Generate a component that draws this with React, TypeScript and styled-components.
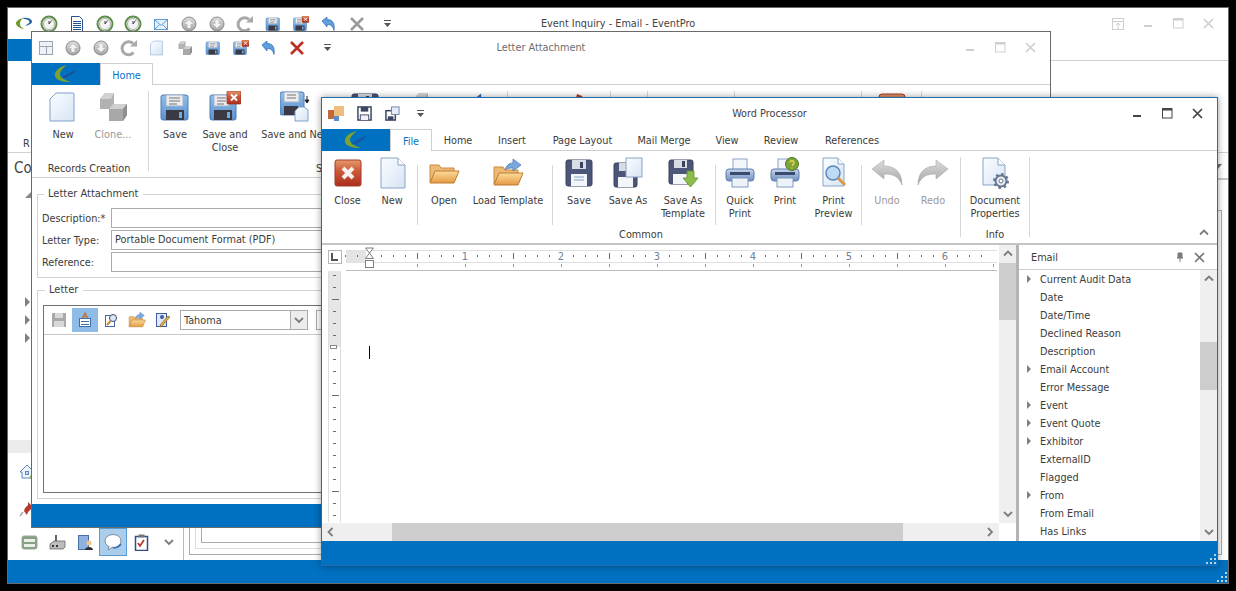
import React from 'react';
import styled, { createGlobalStyle } from 'styled-components';

const GlobalStyle = createGlobalStyle`
  html, body { margin: 0; padding: 0; background: #000; }
  body { font-family: "DejaVu Sans Condensed", "DejaVu Sans", sans-serif; font-size: 10.8px; color: #3c3c3c; }
`;

const BLUE = '#0070c0';

const Desktop = styled.div`
  position: relative;
  width: 1236px;
  height: 591px;
  background: #000;
  overflow: hidden;
`;

/* the three windows sit on a free desktop and overlap */
const Window = styled.div<{ $x: number; $y: number; $w: number; $h: number; $z: number; $active?: boolean }>`
  position: absolute;
  left: ${p => p.$x}px;
  top: ${p => p.$y}px;
  width: ${p => p.$w}px;
  height: ${p => p.$h}px;
  z-index: ${p => p.$z};
  box-sizing: border-box;
  display: flex;
  flex-direction: column;
  background: #fff;
  border: 1px solid ${p => (p.$active ? '#1f6fae' : '#6a6a6a')};
  box-shadow: ${p => (p.$active ? '0 0 7px rgba(0,0,0,.4)' : 'none')};
`;

const TitleRow = styled.div`
  height: 31px;
  flex: none;
  display: grid;
  grid-template-columns: 1fr auto 1fr;
  align-items: center;
`;

const Qat = styled.div<{ $pad?: number }>`
  display: flex;
  align-items: center;
  padding-left: ${p => p.$pad || 0}px;
`;

const QatCell = styled.div<{ $w?: number }>`
  width: ${p => p.$w || 28}px;
  height: 24px;
  flex: none;
  display: flex;
  align-items: center;
  justify-content: center;
`;

const Title = styled.div<{ $dim?: boolean }>`
  color: ${p => (p.$dim ? '#6e6e6e' : '#444')};
  white-space: nowrap;
`;

const WinButtons = styled.div`
  display: flex;
  justify-content: flex-end;
  padding-right: 5px;
`;

const WinButton = styled.div`
  width: 30px;
  height: 24px;
  display: flex;
  align-items: center;
  justify-content: center;
`;

const TabRow = styled.div`
  height: 22px;
  flex: none;
  display: flex;
  box-sizing: border-box;
  border-bottom: 1px solid #cfcfcf;
`;

const LogoTab = styled.div`
  width: 68px;
  height: 22px;
  flex: none;
  background: ${BLUE};
  display: flex;
  align-items: center;
  justify-content: center;
`;

const Tab = styled.div<{ $w: number; $on?: boolean }>`
  width: ${p => p.$w}px;
  height: ${p => (p.$on ? 22 : 21)}px;
  box-sizing: border-box;
  flex: none;
  display: flex;
  align-items: center;
  justify-content: center;
  padding-top: 2px;
  color: ${p => (p.$on ? '#0a72c4' : '#3c3c3c')};
  background: #fff;
  ${p => (p.$on ? 'border: 1px solid #cfcfcf; border-bottom: 0; position: relative; z-index: 1;' : '')}
`;

const Ribbon = styled.div<{ $pad: number }>`
  height: 92px;
  flex: none;
  box-sizing: border-box;
  display: flex;
  padding-left: ${p => p.$pad}px;
  position: relative;
`;

const Group = styled.div`
  display: flex;
  flex-direction: column;
  justify-content: space-between;
  padding-top: 6px;
  padding-bottom: 2px;
  box-sizing: border-box;
`;

const GroupItems = styled.div`
  display: flex;
`;

const GroupLabel = styled.div`
  text-align: center;
  line-height: 13px;
`;

const RibbonButton = styled.div<{ $w: number; $off?: boolean }>`
  width: ${p => p.$w}px;
  flex: none;
  display: flex;
  flex-direction: column;
  align-items: center;
  color: ${p => (p.$off ? '#9a9a9a' : '#3c3c3c')};
`;

const IconSlot = styled.div`
  height: 32px;
  display: flex;
  align-items: center;
  justify-content: center;
`;

const ButtonLabel = styled.div`
  margin-top: 5px;
  line-height: 13px;
  text-align: center;
  white-space: nowrap;
`;

const ItemSep = styled.div`
  width: 1px;
  height: 60px;
  margin: 8px 3px 0;
  background: #d8d8d8;
  flex: none;
`;

const GroupSep = styled.div<{ $left?: number }>`
  width: 1px;
  height: 80px;
  margin: 6px 3px 0 ${p => p.$left ?? 3}px;
  background: #d8d8d8;
  flex: none;
`;

const Collapse = styled.div`
  position: absolute;
  right: 8px;
  bottom: 5px;
`;

const StatusBar = styled.div<{ $h: number }>`
  height: ${p => p.$h}px;
  flex: none;
  background: ${BLUE};
  display: flex;
  justify-content: flex-end;
  align-items: flex-end;
`;

/* ---------- main window, mostly hidden ---------- */

const MainRibbon = styled.div`
  height: 92px;
  flex: none;
  box-sizing: border-box;
  border-bottom: 1px solid #d0d0d0;
  display: flex;
  align-items: flex-end;
  padding: 0 0 2px 15px;
`;

const MainBody = styled.div`
  flex: 1;
  min-height: 0;
  display: flex;
`;

const Sidebar = styled.div`
  width: 176px;
  flex: none;
  box-sizing: border-box;
  border-right: 1px solid #b8b8b8;
  display: flex;
  flex-direction: column;
`;

const SidebarHeading = styled.div`
  height: 30px;
  padding-left: 6px;
  display: flex;
  align-items: center;
  font-size: 15px;
  color: #444;
`;

const CornerMark = styled.div`
  margin: 9px 0 0 17px;
  width: 0;
  height: 0;
  border-bottom: 6px solid #8a8a8a;
  border-left: 6px solid transparent;
`;

const TreeMarks = styled.div`
  margin: 99px 0 0 17px;
  display: flex;
  flex-direction: column;
  gap: 8px;
`;

const TreeMark = styled.div`
  width: 0;
  height: 0;
  border-left: 5px solid #808080;
  border-top: 5px solid transparent;
  border-bottom: 5px solid transparent;
`;

const NavBand = styled.div`
  margin-top: auto;
  height: 13px;
  background: #ececec;
`;

const NavRow = styled.div`
  height: 37px;
  padding-left: 11px;
  display: flex;
  align-items: center;
`;

const NavBottom = styled.div`
  height: 32px;
  margin-top: 1px;
  padding-left: 7px;
  display: flex;
  align-items: flex-start;
`;

const NavCell = styled.div<{ $on?: boolean }>`
  width: 28px;
  height: 28px;
  box-sizing: border-box;
  display: flex;
  align-items: center;
  justify-content: center;
  ${p => (p.$on ? 'background: #aacdec; border: 1px solid #5b9bd5;' : '')}
`;

const Content = styled.div`
  flex: 1;
  min-width: 0;
  display: flex;
  flex-direction: column;
`;

const ContentHead = styled.div`
  height: 27px;
  flex: none;
  box-sizing: border-box;
  border-bottom: 2px solid #c8c8c8;
  display: flex;
  justify-content: flex-end;
  padding: 11px 6px 0 0;
`;

const DownMark = styled.div`
  width: 0;
  height: 0;
  border-top: 6px solid #707070;
  border-left: 5px solid transparent;
  border-right: 5px solid transparent;
`;

const NestedOuter = styled.div`
  flex: 1;
  margin: 30px 6px 5px 5px;
  padding: 5px;
  border: 1px solid #ababab;
  display: flex;
`;

const NestedMiddle = styled(NestedOuter)`
  margin: 0;
  border-color: #dcdcdc;
`;

const NestedInner = styled.div`
  flex: 1;
  border: 1px solid #ababab;
`;

/* ---------- letter attachment body ---------- */

const LetterBody = styled.div`
  flex: 1;
  min-height: 0;
  border-top: 1px solid #cfcfcf;
  padding: 9px 5px 5px;
  display: flex;
  flex-direction: column;
  gap: 5px;
`;

const Fieldset = styled.fieldset<{ $grow?: boolean }>`
  margin: 0;
  min-width: 0;
  border: 1px solid #d2d2d2;
  box-sizing: border-box;
  padding: ${p => (p.$grow ? '8px 5px 5px' : '7px 4px 5px')};
  ${p => (p.$grow ? 'flex: 1; min-height: 0; display: flex; flex-direction: column;' : '')}
`;

const Legend = styled.legend`
  margin-left: 2px;
  padding: 0 5px 0 4px;
  line-height: 14px;
  font-size: 11px;
`;

const FormGrid = styled.div`
  display: grid;
  grid-template-columns: 69px 1fr;
  row-gap: 2px;
  align-items: center;
`;

const InputBox = styled.div`
  height: 20px;
  box-sizing: border-box;
  border: 1px solid #ababab;
  padding-left: 3px;
  line-height: 18px;
`;

const EditorFrame = styled.div`
  flex: 1;
  min-height: 0;
  border: 1px solid #707070;
`;

const EditorBar = styled.div`
  height: 29px;
  box-sizing: border-box;
  border-bottom: 1px solid #c8c8c8;
  display: flex;
  align-items: center;
  padding-left: 2px;
`;

const BarCell = styled.div<{ $on?: boolean }>`
  width: 26px;
  height: 24px;
  display: flex;
  align-items: center;
  justify-content: center;
  background: ${p => (p.$on ? '#8fbce6' : 'transparent')};
`;

const FontCombo = styled.div`
  width: 128px;
  height: 20px;
  margin-left: 4px;
  box-sizing: border-box;
  border: 1px solid #ababab;
  display: flex;
  align-items: center;
  padding-left: 3px;
  justify-content: space-between;
  flex: none;
`;

const ComboArrow = styled.div`
  width: 16px;
  height: 18px;
  background: #ececec;
  border-left: 1px solid #ababab;
  display: flex;
  align-items: center;
  justify-content: center;
`;

const SizeCombo = styled.div`
  width: 60px;
  height: 20px;
  margin-left: 8px;
  box-sizing: border-box;
  border: 1px solid #ababab;
  flex: none;
`;

/* ---------- word processor body ---------- */

const WordBody = styled.div`
  flex: 1;
  min-height: 0;
  border-top: 2px solid #c4c4c4;
  display: flex;
`;

const DocPane = styled.div`
  width: 694px;
  flex: none;
  display: flex;
`;

const DocMain = styled.div`
  width: 677px;
  flex: none;
  display: flex;
  flex-direction: column;
`;

const RulerRow = styled.div`
  height: 26px;
  flex: none;
  display: flex;
  padding-left: 6px;
`;

const RulerCorner = styled.div`
  width: 14px;
  height: 14px;
  box-sizing: border-box;
  margin-top: 5px;
  border: 1px solid #b5b5b5;
  display: flex;
  align-items: center;
  justify-content: center;
  flex: none;
`;

const HRuler = styled.svg`
  margin: 5px 0 0 4px;
  overflow: visible;
  display: block;
`;

const DocMiddle = styled.div`
  flex: 1;
  min-height: 0;
  display: flex;
`;

const VRuler = styled.svg`
  flex: none;
  display: block;
`;

const Page = styled.div`
  flex: 1;
  padding: 75px 0 0 28px;
`;

const Caret = styled.div`
  width: 1px;
  height: 13px;
  background: #000;
`;

const HScroll = styled.div`
  height: 18px;
  flex: none;
  background: #efefef;
  display: flex;
  align-items: center;
`;

const ScrollEnd = styled.div`
  width: 18px;
  height: 18px;
  flex: none;
  display: flex;
  align-items: center;
  justify-content: center;
`;

const HThumb = styled.div`
  width: 511px;
  height: 18px;
  margin-left: 52px;
  background: #cdcdcd;
`;

const ScrollGap = styled.div`
  flex: 1;
`;

const VScroll = styled.div<{ $h?: number }>`
  width: 17px;
  flex: none;
  height: ${p => (p.$h ? `${p.$h}px` : 'auto')};
  background: #efefef;
  display: flex;
  flex-direction: column;
`;

const VThumb = styled.div<{ $top: number; $h: number }>`
  margin-top: ${p => p.$top}px;
  height: ${p => p.$h}px;
  background: #cdcdcd;
  flex: none;
`;

const VEnd = styled.div`
  height: 18px;
  flex: none;
  display: flex;
  align-items: center;
  justify-content: center;
`;

const Splitter = styled.div`
  width: 3px;
  flex: none;
  background: #b4b4b4;
`;

const Panel = styled.div`
  flex: 1;
  min-width: 0;
  display: flex;
  flex-direction: column;
`;

const PanelHead = styled.div`
  height: 25px;
  flex: none;
  box-sizing: border-box;
  border-bottom: 1px solid #cfcfcf;
  display: flex;
  align-items: center;
  padding: 0 12px 0 12px;
  gap: 9px;
`;

const PanelTitle = styled.div`
  flex: 1;
`;

const PanelBody = styled.div`
  flex: 1;
  min-height: 0;
  display: flex;
  overflow: hidden;
`;

const Tree = styled.div`
  flex: 1;
  min-width: 0;
`;

const TreeRow = styled.div`
  height: 18px;
  display: flex;
  align-items: center;
  padding-left: 8px;
`;

const TreeArrow = styled.div<{ $show: boolean }>`
  flex: none;
  height: 8px;
  box-sizing: border-box;
  ${p =>
    p.$show
      ? `width: 0; margin-right: 9px; border-left: 4px solid #808080; border-top: 4px solid transparent; border-bottom: 4px solid transparent;`
      : `width: 13px;`}
`;

const IconSvg = styled.svg`
  display: block;
  flex: none;
`;

const SvgDefs = styled.svg`
  position: absolute;
  width: 0;
  height: 0;
`;

const SpellMark = styled.div`
  font-weight: bold;
  color: #3e4664;
  font-size: 11px;
  line-height: 32px;
`;

/* ---------- icons ---------- */

type IconProps = { s?: number };
type BaseProps = IconProps & { children: React.ReactNode; vb?: number };

const Ic = ({ s = 32, vb = 32, children }: BaseProps) => (
  <IconSvg width={s} height={s} viewBox={`0 0 ${vb} ${vb}`}>
    {children}
  </IconSvg>
);

const Defs = () => (
  <SvgDefs>
    <defs>
      <linearGradient id="gBlue" x1="0" y1="0" x2="0" y2="1">
        <stop offset="0" stopColor="#93bfe8" />
        <stop offset="1" stopColor="#5a90cf" />
      </linearGradient>
      <linearGradient id="gPage" x1="0" y1="0" x2="1" y2="1">
        <stop offset="0" stopColor="#fbfdff" />
        <stop offset="1" stopColor="#d6e4f4" />
      </linearGradient>
      <linearGradient id="gRed" x1="0" y1="0" x2="0" y2="1">
        <stop offset="0" stopColor="#e49a6c" />
        <stop offset="0.4" stopColor="#cf5b3a" />
        <stop offset="1" stopColor="#a92d1e" />
      </linearGradient>
      <linearGradient id="gFolder" x1="0" y1="0" x2="0" y2="1">
        <stop offset="0" stopColor="#fbdc9c" />
        <stop offset="1" stopColor="#e59a44" />
      </linearGradient>
      <linearGradient id="gGray" x1="0" y1="0" x2="0" y2="1">
        <stop offset="0" stopColor="#dcdcdc" />
        <stop offset="1" stopColor="#a4a4a4" />
      </linearGradient>
      <linearGradient id="gPrinter" x1="0" y1="0" x2="0" y2="1">
        <stop offset="0" stopColor="#c8d6ea" />
        <stop offset="1" stopColor="#6f8fc0" />
      </linearGradient>
    </defs>
  </SvgDefs>
);

const Logo = () => (
  <IconSvg width="26" height="20" viewBox="0 0 26 20">
    <path d="M14 1C5 3 1 8 2 12c1 4 7 6 16 6-7-2-12-5-11-9 1-3 4-6 7-8z" fill="#7ea32c" />
    <path d="M9 13l14-7-2 3-9 5z" fill="#1d4f94" />
  </IconSvg>
);

const AppLogo = () => (
  <IconSvg width="16" height="14" viewBox="0 0 16 14">
    <path d="M7 1C3 2 0 4 0 6.500c0 3 5 5 9 6-3-2-5-3-5-5.500C4 4 5.500 2.500 7 1z" fill="#6f9a2c" />
    <path d="M6 1c4-1 9 0 10 3 .5 2-2 4-7 5l4-3c1-1 0-3-2-3.500C9 2 8 2 6 1z" fill="#1f62a8" />
  </IconSvg>
);

const FloppyLight = ({ s = 32 }: IconProps) => (
  <Ic s={s}>
    <rect x="2" y="4" width="27" height="25" rx="2" fill="url(#gBlue)" stroke="#4d7cb5" />
    <rect x="7" y="4" width="17" height="11" fill="#ededed" stroke="#9fb4cc" />
    <path d="M10 7h11M10 10h11M10 13h8" stroke="#777" />
    <rect x="7" y="19" width="18" height="10" fill="#3b3a44" />
    <rect x="20" y="21" width="3" height="6" fill="#79a9dc" />
  </Ic>
);

const RedBadge = () => (
  <g>
    <rect x="18" y="0" width="14" height="13" rx="1" fill="url(#gRed)" stroke="#9c2c1d" strokeWidth=".7" />
    <path d="M22 3.500l6 6M28 3.500l-6 6" stroke="#fff" strokeWidth="2" />
  </g>
);

const FloppyClose = ({ s = 32 }: IconProps) => (
  <Ic s={s}>
    <rect x="1" y="4" width="26" height="25" rx="2" fill="url(#gBlue)" stroke="#4d7cb5" />
    <rect x="5" y="4" width="15" height="11" fill="#ededed" stroke="#9fb4cc" />
    <path d="M8 7h9M8 10h9M8 13h7" stroke="#777" />
    <rect x="5" y="19" width="18" height="10" fill="#3b3a44" />
    <rect x="18" y="21" width="3" height="6" fill="#79a9dc" />
    <RedBadge />
  </Ic>
);

const FloppyNew = ({ s = 32 }: IconProps) => (
  <Ic s={s}>
    <rect x="0" y="1" width="24" height="23" rx="2" fill="url(#gBlue)" stroke="#4d7cb5" />
    <rect x="4" y="1" width="15" height="10" fill="#ededed" stroke="#9fb4cc" />
    <path d="M7 4h9M7 7h9" stroke="#777" />
    <rect x="4" y="15" width="14" height="9" fill="#3b3a44" />
    <path d="M19 16h5l4 3v11H15V20z" fill="url(#gPage)" stroke="#7ea1cc" />
    <path d="M27 5v6M25 9l2 3 2-3z" stroke="#222" fill="#222" />
  </Ic>
);

const PageCut = ({ s = 32 }: IconProps) => (
  <Ic s={s}>
    <path d="M9 2h17a1 1 0 0 1 1 1v27H3V8z" fill="url(#gPage)" stroke="#7ea1cc" />
  </Ic>
);

const Cubes = ({ s = 32 }: IconProps) => (
  <Ic s={s}>
    <path d="M3 8l5-6h9v12l-3 4H3z" fill="#b2b2b2" />
    <path d="M8 2h9l-3 6H3z" fill="#d2d2d2" />
    <path d="M12 18l4-5h14v11l-4 6H12z" fill="#a8a8a8" />
    <path d="M16 13h14l-4 5H12z" fill="#d0d0d0" />
    <path d="M26 18l4-5v11l-4 6z" fill="#8e8e8e" />
  </Ic>
);

const CloseBox = ({ s = 32 }: IconProps) => (
  <Ic s={s}>
    <rect x="3" y="3" width="26" height="26" rx="2" fill="url(#gRed)" stroke="#a43a28" />
    <path d="M11 11l10 10M21 11L11 21" stroke="#f7f0ec" strokeWidth="4" />
  </Ic>
);

const PageFold = ({ s = 32 }: IconProps) => (
  <Ic s={s}>
    <path d="M5 1h17l7 7v23H5z" fill="url(#gPage)" stroke="#8aa4c6" />
    <path d="M22 1v7h7" fill="#fff" stroke="#8aa4c6" />
  </Ic>
);

const FolderOpen = ({ s = 32 }: IconProps) => (
  <Ic s={s}>
    <path d="M2 25V8h9l2 3h13v4H8z" fill="#eeb974" stroke="#c98a3c" />
    <path d="M2 26l5-12h24l-5 12z" fill="url(#gFolder)" stroke="#bf7d31" />
  </Ic>
);

const FolderArrow = ({ s = 32 }: IconProps) => (
  <Ic s={s}>
    <path d="M2 27V10h9l2 3h13v4H8z" fill="#eeb974" stroke="#c98a3c" />
    <path d="M2 28l5-12h24l-5 12z" fill="url(#gFolder)" stroke="#bf7d31" />
    <path d="M13 13c1-4 4-7 8-7V2l8 6-8 6v-3c-3 0-5 0-8 2z" fill="#7aa8dc" stroke="#4f7fb8" strokeWidth=".8" />
  </Ic>
);

const FloppyDark = ({ s = 32 }: IconProps) => (
  <Ic s={s}>
    <rect x="3" y="3" width="26" height="26" rx="2" fill="#4c5678" stroke="#39415e" />
    <rect x="9" y="3" width="14" height="9" fill="#d8dce4" />
    <rect x="17" y="5" width="3" height="6" fill="#39415e" />
    <rect x="8" y="17" width="16" height="12" fill="#f2f5fa" />
    <path d="M11 20h10M11 23h10" stroke="#8ba3c6" />
  </Ic>
);

const FloppySaveAs = ({ s = 32 }: IconProps) => (
  <Ic s={s}>
    <rect x="2" y="6" width="23" height="24" rx="2" fill="#4c5678" stroke="#39415e" />
    <rect x="7" y="6" width="12" height="8" fill="#d8dce4" />
    <rect x="6" y="20" width="15" height="10" fill="#f2f5fa" />
    <rect x="14" y="1" width="16" height="19" fill="url(#gPage)" stroke="#8aa4c6" />
  </Ic>
);

const FloppyTemplate = ({ s = 32 }: IconProps) => (
  <Ic s={s}>
    <rect x="2" y="3" width="24" height="24" rx="2" fill="#4c5678" stroke="#39415e" />
    <rect x="7" y="3" width="13" height="8" fill="#d8dce4" />
    <rect x="15" y="4" width="3" height="6" fill="#39415e" />
    <rect x="6" y="17" width="14" height="10" fill="#f2f5fa" />
    <path d="M20 14h7v7h4l-7.500 9L16 21h4z" fill="#8cbc4a" stroke="#5f8f2c" strokeWidth=".8" />
  </Ic>
);

const Printer = ({ s = 32, help }: IconProps & { help?: boolean }) => (
  <Ic s={s}>
    <rect x="9" y="2" width="14" height="11" fill="#f3f6fb" stroke="#8aa4c6" />
    <rect x="2" y="12" width="28" height="12" rx="3" fill="url(#gPrinter)" stroke="#5d7fb2" />
    <rect x="6" y="15" width="20" height="3" fill="#3a4a70" />
    <rect x="8" y="21" width="16" height="9" fill="#eef3fa" stroke="#7e9ac2" />
    {help && <circle cx="23" cy="7" r="6.500" fill="#7aa33a" stroke="#4f7a20" />}
    {help && <path d="M21 5.500a2 2 0 1 1 2.500 2.200V9M23 10.500v1" stroke="#f2d54c" strokeWidth="1.300" fill="none" />}
  </Ic>
);

const Preview = ({ s = 32 }: IconProps) => (
  <Ic s={s}>
    <path d="M5 1h15l6 6v22H5z" fill="url(#gPage)" stroke="#8aa4c6" />
    <path d="M20 1v6h6" fill="#fff" stroke="#8aa4c6" />
    <circle cx="15" cy="16" r="7" fill="#bcdcf5" stroke="#5c87b8" strokeWidth="1.500" />
    <path d="M20 21l7 7" stroke="#d89a3c" strokeWidth="3" />
  </Ic>
);

const UndoBig = ({ s = 32, flip }: IconProps & { flip?: boolean }) => (
  <IconSvg width={s} height={s} viewBox="0 0 32 32">
    <g transform={flip ? 'matrix(-1 0 0 1 32 0)' : undefined}>
      <path
        d="M1 12L13 3v6c11 0 18 6 18 19-3-8-8-11-18-11v5z"
        fill="url(#gGray)"
        stroke="#a8a8a8"
        strokeWidth=".6"
      />
    </g>
  </IconSvg>
);

const DocProps = ({ s = 32 }: IconProps) => (
  <Ic s={s}>
    <path d="M4 1h15l7 7v20H4z" fill="url(#gPage)" stroke="#8aa4c6" />
    <path d="M19 1v7h7" fill="#fff" stroke="#8aa4c6" />
    <circle cx="22" cy="24" r="5.500" fill="#e8ecf2" stroke="#65768f" strokeWidth="2" />
    <circle cx="22" cy="24" r="7" fill="none" stroke="#65768f" strokeWidth="2" strokeDasharray="2.500 3" />
    <circle cx="22" cy="24" r="2" fill="#fff" stroke="#65768f" />
  </Ic>
);

const Clock = ({ s = 18 }: IconProps) => (
  <Ic s={s} vb={18}>
    <circle cx="9" cy="9" r="7.500" fill="#fff" stroke="#5f8d4a" strokeWidth="2" />
    <circle cx="9" cy="9" r="5.500" fill="#f4f4f4" stroke="#b0b0b0" />
    <path d="M9 9L11.500 5.500M9 9V6" stroke="#444" />
  </Ic>
);

const DocLines = ({ s = 18 }: IconProps) => (
  <Ic s={s} vb={18}>
    <path d="M3.500 1.500h8l3 3v12h-11z" fill="#fff" stroke="#27508f" />
    <path d="M5 6.500h8M5 8.500h8M5 10.500h8M5 12.500h8M5 14.500h8" stroke="#27508f" />
  </Ic>
);

const Envelope = ({ s = 18 }: IconProps) => (
  <Ic s={s} vb={18}>
    <rect x="2.500" y="4.500" width="13" height="10" fill="#e6f1fb" stroke="#5e9bd6" />
    <path d="M2.500 4.500l6.500 6 6.500-6M2.500 14.500l5-5M15.500 14.500l-5-5" fill="none" stroke="#5e9bd6" />
  </Ic>
);

const GrayArrow = ({ s = 16, down }: IconProps & { down?: boolean }) => (
  <Ic s={s} vb={16}>
    <circle cx="8" cy="8" r="7" fill="url(#gGray)" stroke="#8c8c8c" />
    <path d={down ? 'M8 12L4 8h2.500V4h3v4H12z' : 'M8 4l4 4H9.500v4h-3V8H4z'} fill="#f3f3f3" />
  </Ic>
);

const RefreshGray = ({ s = 18 }: IconProps) => (
  <Ic s={s} vb={18}>
    <path d="M13.500 13.500A6.500 6.500 0 1 1 13 4.500" fill="none" stroke="#a8a8a8" strokeWidth="3" />
    <path d="M10 7.500h7V1z" fill="#a8a8a8" />
  </Ic>
);

const UndoSmall = ({ s = 16 }: IconProps) => (
  <Ic s={s} vb={16}>
    <path d="M1 5l5-4v2.500c6 0 8 4 7 11-1-4-3-6-7-6V11z" fill="#5f9fe0" stroke="#2c69b0" strokeWidth=".7" />
  </Ic>
);

const BigX = ({ color }: { color: string }) => (
  <Ic s={16} vb={16}>
    <path d="M2 2l12 12M14 2L2 14" stroke={color} strokeWidth="2.600" />
  </Ic>
);

const Drop = () => (
  <Ic s={9} vb={9}>
    <path d="M1 1.500h7" stroke="#555" />
    <path d="M1 4h7L4.500 8z" fill="#555" />
  </Ic>
);

const RestoreUp = ({ color }: { color: string }) => (
  <Ic s={14} vb={14}>
    <rect x="1.500" y="1.500" width="11" height="11" fill="none" stroke={color} />
    <path d="M1 4.500h12M7 12V6M5 8l2-2 2 2" fill="none" stroke={color} />
  </Ic>
);

const MinGlyph = ({ color }: { color: string }) => (
  <Ic s={10} vb={10}>
    <rect x="1" y="6" width="8" height="2" fill={color} />
  </Ic>
);

const MaxGlyph = ({ color }: { color: string }) => (
  <Ic s={11} vb={11}>
    <rect x=".5" y=".5" width="9.500" height="9.500" fill="none" stroke={color} />
    <rect x=".5" y=".5" width="9.500" height="2" fill={color} />
  </Ic>
);

const CloseGlyph = ({ color }: { color: string }) => (
  <Ic s={11} vb={11}>
    <path d="M1 1l9 9M10 1l-9 9" stroke={color} strokeWidth="1.700" />
  </Ic>
);

const Chevron = ({ dir = 'down', color = '#7d7d7d' }: { dir?: 'up' | 'down' | 'left' | 'right'; color?: string }) => {
  const d = {
    up: 'M1 6.500L5 2.500l4 4',
    down: 'M1 3l4 4 4-4',
    left: 'M6.500 1L2.500 5l4 4',
    right: 'M3 1l4 4-4 4',
  }[dir];
  return (
    <Ic s={10} vb={10}>
      <path d={d} fill="none" stroke={color} strokeWidth="1.800" />
    </Ic>
  );
};

const Pin = () => (
  <Ic s={10} vb={10}>
    <path d="M3 1h4v4l1 1H2l1-1zM5 6v4" fill="#7a7a7a" stroke="#7a7a7a" />
  </Ic>
);

const Grip = () => (
  <IconSvg width="12" height="12" viewBox="0 0 12 12">
    {[[9, 1], [5, 5], [9, 5], [1, 9], [5, 9], [9, 9]].map(([x, y]) => (
      <rect key={`${x}-${y}`} x={x} y={y} width="2" height="2" fill="#b8d4ec" />
    ))}
  </IconSvg>
);

const WordAppIcon = () => (
  <Ic s={16} vb={16}>
    <rect x="6" y="0" width="10" height="10" fill="#efbd7e" />
    <rect x="0" y="4" width="6" height="9" fill="#c0693a" />
    <rect x="6" y="10" width="5" height="5" fill="#5b8ccb" />
  </Ic>
);

const SmallDarkSave = ({ s = 15 }: IconProps) => (
  <Ic s={s} vb={16}>
    <rect x="1" y="1" width="14" height="14" fill="#fff" stroke="#3e4664" strokeWidth="1.600" />
    <rect x="4" y="1" width="8" height="5" fill="#3e4664" />
    <rect x="3" y="9" width="10" height="6" fill="#3e4664" />
    <rect x="4" y="10" width="8" height="5" fill="#eef2f8" />
  </Ic>
);

const SmallSaveAll = ({ s = 15 }: IconProps) => (
  <Ic s={s} vb={16}>
    <rect x="1" y="5" width="10" height="10" fill="#fff" stroke="#3e4664" strokeWidth="1.600" />
    <rect x="3" y="11" width="6" height="4" fill="#3e4664" />
    <rect x="7" y="1" width="8" height="8" fill="#e6edf6" stroke="#6b82a8" />
  </Ic>
);

const SmallSaveGray = () => (
  <Ic s={16} vb={16}>
    <rect x="1" y="1" width="14" height="14" rx="1" fill="#a8a8a8" />
    <rect x="4" y="1" width="8" height="5" fill="#d8d8d8" />
    <rect x="3" y="9" width="10" height="6" fill="#d8d8d8" />
  </Ic>
);

const FormDoc = () => (
  <Ic s={16} vb={16}>
    <rect x="1.500" y="1.500" width="13" height="13" fill="#eef2f7" stroke="#9aa5b4" />
    <path d="M1.500 6.500h13M8.500 6.500v8" stroke="#9aa5b4" />
  </Ic>
);

const TextDoc = () => (
  <Ic s={16} vb={16}>
    <rect x="2.500" y="6.500" width="11" height="8" fill="#fff" stroke="#3f6bab" />
    <path d="M4 9.500h8M4 12.500h8" stroke="#3f6bab" />
    <path d="M5.500 6L8 1l2.500 5M6.500 4.500h3" fill="none" stroke="#c76a2a" strokeWidth="1.200" />
  </Ic>
);

const FindDoc = () => (
  <Ic s={16} vb={16}>
    <rect x="2.500" y="3.500" width="9" height="11" fill="#fff" stroke="#3f6bab" />
    <circle cx="10" cy="6" r="3.500" fill="#d7e9f8" stroke="#4a4a6a" />
    <path d="M7.500 9L4 13" stroke="#c28a3a" strokeWidth="2" />
  </Ic>
);

const SignDoc = () => (
  <Ic s={16} vb={16}>
    <rect x="1.500" y="1.500" width="10" height="13" fill="#dfe8f6" stroke="#3f5fa0" />
    <circle cx="7" cy="5" r="2" fill="#3f5fa0" />
    <path d="M15 5L7 14l-2 1 .5-2.500L13 4z" fill="#e7b14f" stroke="#8a5a1e" strokeWidth=".7" />
  </Ic>
);

const HomeIcon = () => (
  <Ic s={16} vb={16}>
    <path d="M8 1L1 8h2v6h10V8h2z" fill="#f2f6fb" stroke="#5a87c4" />
    <rect x="6.500" y="7.500" width="3" height="3" fill="#cfe0f4" stroke="#5a87c4" />
    <circle cx="13" cy="13" r="2" fill="#7aa33a" />
  </Ic>
);

const PinRed = () => (
  <Ic s={16} vb={16}>
    <path d="M9 1l6 6-3 1-3 3-1 3-3-4 1-3 3-3z" fill="#b6382a" />
    <path d="M4 11l-3 4" stroke="#aaa" strokeWidth="1.500" />
  </Ic>
);

const GreenCard = () => (
  <Ic s={17} vb={17}>
    <rect x="1" y="2" width="15" height="13" rx="2" fill="#86a086" stroke="#9aa89a" />
    <rect x="3" y="5" width="11" height="3" fill="#e8f0e8" />
    <rect x="3" y="10" width="11" height="3" fill="#e8f0e8" />
  </Ic>
);

const Factory = () => (
  <Ic s={17} vb={17}>
    <rect x="6" y="1" width="2" height="7" fill="#666" />
    <path d="M1 10l4-3h11v6l-2 2H1z" fill="#bdbdbd" stroke="#555" strokeWidth=".7" />
    <rect x="3" y="11" width="2" height="2" fill="#333" />
    <rect x="7" y="11" width="2" height="2" fill="#333" />
  </Ic>
);

const PersonDoc = () => (
  <Ic s={17} vb={17}>
    <rect x="1.500" y="1.500" width="10" height="14" fill="#8fb1de" stroke="#4a6fa8" />
    <circle cx="12" cy="9" r="2.500" fill="#f0c48a" />
    <path d="M8 16c0-4 8-4 8 0z" fill="#2e2e2e" />
  </Ic>
);

const ChatBubble = () => (
  <Ic s={18} vb={18}>
    <ellipse cx="9" cy="8" rx="8" ry="6.500" fill="#fff" stroke="#7d8da3" />
    <path d="M5 13l-1 4 5-3" fill="#fff" stroke="#7d8da3" />
    <path d="M9 15c3 0 6-1 8-4" stroke="#3d74ba" strokeWidth="1.500" fill="none" />
  </Ic>
);

const Clipboard = () => (
  <Ic s={17} vb={17}>
    <rect x="2.500" y="2.500" width="12" height="14" fill="#fff" stroke="#2e4f88" strokeWidth="1.500" />
    <rect x="5.500" y="0.500" width="6" height="3" fill="#777" />
    <path d="M5 9l2 3 4-6" fill="none" stroke="#c0392b" strokeWidth="1.800" />
  </Ic>
);

const LGlyph = () => (
  <Ic s={8} vb={8}>
    <path d="M1 0v7h6" fill="none" stroke="#555" strokeWidth="2" />
  </Ic>
);

const RedTop = () => (
  <Ic s={32}>
    <rect x="3" y="3" width="26" height="26" rx="3" fill="url(#gRed)" stroke="#a43a28" />
  </Ic>
);

const RedFlag = () => (
  <Ic s={32}>
    <path d="M12 3l5 2 2 6H10z" fill="#b6382a" />
  </Ic>
);

/* ---------- rulers ---------- */

const HorizontalRuler = () => {
  const ticks = Array.from({ length: 54 }, (_, i) => i * 12);
  const minor = Array.from({ length: 13 }, (_, i) => 72 + i * 48);
  const nums = [1, 2, 3, 4, 5, 6];
  return (
    <HRuler width="651" height="21" viewBox="0 0 651 21">
      <rect x="0" y="1" width="20" height="11" fill="#e4e4e4" />
      <path d="M0 .5h651M0 12.500h651" stroke="#e0e0e0" />
      <path d="M0 20.500h651" stroke="#bdbdbd" />
      {ticks.map(t => {
        const rel = t - 24;
        if (rel % 96 === 0) return null;
        const long = rel % 48 === 0;
        return <rect key={t} x={t - 1} y={long ? 3 : 5} width="1" height={long ? 6 : 2} fill="#6e6e6e" />;
      })}
      {minor.map(m => (
        <rect key={m} x={m - 1} y="14" width="1" height="3" fill="#9a9a9a" />
      ))}
      {nums.map(n => (
        <text key={n} x={24 + n * 96 - 1} y="10" fontSize="11" textAnchor="middle" fill="#6f8296">
          {n}
        </text>
      ))}
      <path d="M19.500 -2h8l-4 5 4 5.500h-8l4-5.500z" fill="#fff" stroke="#7e7e7e" />
      <rect x="19.500" y="10.500" width="8" height="7" fill="#fff" stroke="#7e7e7e" />
    </HRuler>
  );
};

const VerticalRuler = () => {
  const ticks = Array.from({ length: 21 }, (_, i) => 4 + i * 12);
  return (
    <VRuler width="19" height="251" viewBox="0 0 19 251">
      <rect x="6" y="0" width="13" height="76" fill="#e6e6e6" />
      <path d="M6.500 0v251M18.500 0v251" stroke="#dcdcdc" />
      {ticks.map(t => {
        const rel = t - 76;
        const long = rel % 48 === 0 && rel % 96 !== 0;
        if (rel === 0) return null;
        return <rect key={t} x={long ? 10 : 11} y={t} width={long ? 7 : 3} height="1" fill="#6e6e6e" />;
      })}
      <rect x="8.500" y="74.500" width="6" height="3" fill="#fff" stroke="#8a8a8a" />
    </VRuler>
  );
};

/* ---------- data ---------- */

const treeItems: [string, boolean][] = [
  ['Current Audit Data', true],
  ['Date', false],
  ['Date/Time', false],
  ['Declined Reason', false],
  ['Description', false],
  ['Email Account', true],
  ['Error Message', false],
  ['Event', true],
  ['Event Quote', true],
  ['Exhibitor', true],
  ['ExternalID', false],
  ['Flagged', false],
  ['From', true],
  ['From Email', false],
  ['Has Links', false],
];

const wordTabs: [string, number][] = [
  ['Home', 52],
  ['Insert', 56],
  ['Page Layout', 85],
  ['Mail Merge', 78],
  ['View', 48],
  ['Review', 60],
  ['References', 82],
];

const WindowControls = ({ color, extra }: { color: string; extra?: boolean }) => (
  <WinButtons>
    {extra && (
      <WinButton>
        <RestoreUp color={color} />
      </WinButton>
    )}
    <WinButton>
      <MinGlyph color={color} />
    </WinButton>
    <WinButton>
      <MaxGlyph color={color} />
    </WinButton>
    <WinButton>
      <CloseGlyph color={color} />
    </WinButton>
  </WinButtons>
);

const RBtn = ({ w, off, icon, children }: { w: number; off?: boolean; icon?: React.ReactNode; children?: React.ReactNode }) => (
  <RibbonButton $w={w} $off={off}>
    <IconSlot>{icon}</IconSlot>
    {children && <ButtonLabel>{children}</ButtonLabel>}
  </RibbonButton>
);

const MainWindow = () => (
  <Window $x={7} $y={7} $w={1222} $h={577} $z={1}>
    <TitleRow>
      <Qat $pad={5}>
        <QatCell $w={22}>
          <AppLogo />
        </QatCell>
        <QatCell><Clock /></QatCell>
        <QatCell><DocLines /></QatCell>
        <QatCell><Clock /></QatCell>
        <QatCell><Clock /></QatCell>
        <QatCell><Envelope /></QatCell>
        <QatCell><GrayArrow /></QatCell>
        <QatCell><GrayArrow down /></QatCell>
        <QatCell><RefreshGray /></QatCell>
        <QatCell><FloppyLight s={16} /></QatCell>
        <QatCell><FloppyClose s={16} /></QatCell>
        <QatCell><UndoSmall /></QatCell>
        <QatCell><BigX color="#9a9a9a" /></QatCell>
        <QatCell $w={32}><Drop /></QatCell>
      </Qat>
      <Title>Event Inquiry - Email - EventPro</Title>
      <WindowControls color="#cfcfcf" extra />
    </TitleRow>
    <TabRow>
      <LogoTab />
    </TabRow>
    <MainRibbon>R</MainRibbon>
    <MainBody>
      <Sidebar>
        <SidebarHeading>Co</SidebarHeading>
        <CornerMark />
        <TreeMarks>
          <TreeMark />
          <TreeMark />
          <TreeMark />
        </TreeMarks>
        <NavBand />
        <NavRow><HomeIcon /></NavRow>
        <NavRow><PinRed /></NavRow>
        <NavBottom>
          <NavCell><GreenCard /></NavCell>
          <NavCell><Factory /></NavCell>
          <NavCell><PersonDoc /></NavCell>
          <NavCell $on><ChatBubble /></NavCell>
          <NavCell><Clipboard /></NavCell>
          <NavCell><Chevron /></NavCell>
        </NavBottom>
      </Sidebar>
      <Content>
        <ContentHead>
          <DownMark />
        </ContentHead>
        <NestedOuter>
          <NestedMiddle>
            <NestedInner />
          </NestedMiddle>
        </NestedOuter>
      </Content>
    </MainBody>
    <StatusBar $h={23}>
      <Grip />
    </StatusBar>
  </Window>
);

const LetterWindow = () => (
  <Window $x={31} $y={31} $w={1020} $h={497} $z={2}>
    <TitleRow>
      <Qat>
        <QatCell $w={27}><FormDoc /></QatCell>
        <QatCell><GrayArrow /></QatCell>
        <QatCell><GrayArrow down /></QatCell>
        <QatCell><RefreshGray /></QatCell>
        <QatCell><PageCut s={16} /></QatCell>
        <QatCell><Cubes s={16} /></QatCell>
        <QatCell><FloppyLight s={16} /></QatCell>
        <QatCell><FloppyClose s={16} /></QatCell>
        <QatCell><UndoSmall /></QatCell>
        <QatCell><BigX color="#b8301f" /></QatCell>
        <QatCell $w={32}><Drop /></QatCell>
      </Qat>
      <Title $dim>Letter Attachment</Title>
      <WindowControls color="#cfcfcf" />
    </TitleRow>
    <TabRow>
      <LogoTab><Logo /></LogoTab>
      <Tab $w={53} $on>Home</Tab>
    </TabRow>
    <Ribbon $pad={7}>
      <Group>
        <GroupItems>
          <RBtn w={48} icon={<PageCut />}>New</RBtn>
          <RBtn w={52} off icon={<Cubes />}>Clone...</RBtn>
        </GroupItems>
        <GroupLabel>Records Creation</GroupLabel>
      </Group>
      <GroupSep $left={9} />
      <Group>
        <GroupItems>
          <RBtn w={46} icon={<FloppyLight />}>Save</RBtn>
          <RBtn w={54} icon={<FloppyClose />}>Save and<br />Close</RBtn>
          <RBtn w={88} icon={<FloppyNew />}>Save and New</RBtn>
          <RBtn w={50} icon={<FloppyDark />} />
          <RBtn w={74} icon={<Cubes />} />
          <RBtn w={40} icon={<UndoSmall s={28} />} />
        </GroupItems>
        <GroupLabel>Save</GroupLabel>
      </Group>
      <GroupSep />
      <Group>
        <GroupItems>
          <RBtn w={44} icon={<SpellMark>ABC</SpellMark>} />
          <RBtn w={52} icon={<RedFlag />} />
        </GroupItems>
      </Group>
      <GroupSep />
      <RBtn w={30} />
      <GroupSep />
      <RBtn w={80} />
      <GroupSep />
      <RBtn w={120} />
      <GroupSep />
      <Group>
        <GroupItems>
          <RBtn w={53} icon={<RedTop />} />
        </GroupItems>
      </Group>
      <GroupSep />
    </Ribbon>
    <LetterBody>
      <Fieldset>
        <Legend>Letter Attachment</Legend>
        <FormGrid>
          <div>Description:*</div>
          <InputBox />
          <div>Letter Type:</div>
          <InputBox>Portable Document Format (PDF)</InputBox>
          <div>Reference:</div>
          <InputBox />
        </FormGrid>
      </Fieldset>
      <Fieldset $grow>
        <Legend>Letter</Legend>
        <EditorFrame>
          <EditorBar>
            <BarCell><SmallSaveGray /></BarCell>
            <BarCell $on><TextDoc /></BarCell>
            <BarCell><FindDoc /></BarCell>
            <BarCell><FolderArrow s={18} /></BarCell>
            <BarCell><SignDoc /></BarCell>
            <FontCombo>
              Tahoma
              <ComboArrow><Chevron /></ComboArrow>
            </FontCombo>
            <SizeCombo />
          </EditorBar>
        </EditorFrame>
      </Fieldset>
    </LetterBody>
    <StatusBar $h={23} />
  </Window>
);

const WordWindow = () => (
  <Window $x={321} $y={97} $w={897} $h={469} $z={3} $active>
    <TitleRow>
      <Qat>
        <QatCell><WordAppIcon /></QatCell>
        <QatCell><SmallDarkSave /></QatCell>
        <QatCell><SmallSaveAll /></QatCell>
        <QatCell><Drop /></QatCell>
      </Qat>
      <Title>Word Processor</Title>
      <WindowControls color="#444" />
    </TitleRow>
    <TabRow>
      <LogoTab><Logo /></LogoTab>
      <Tab $w={42} $on>File</Tab>
      {wordTabs.map(([t, w]) => (
        <Tab key={t} $w={w}>{t}</Tab>
      ))}
    </TabRow>
    <Ribbon $pad={3}>
      <Group>
        <GroupItems>
          <RBtn w={45} icon={<CloseBox />}>Close</RBtn>
          <RBtn w={44} icon={<PageFold />}>New</RBtn>
          <ItemSep />
          <RBtn w={46} icon={<FolderOpen />}>Open</RBtn>
          <RBtn w={82} icon={<FolderArrow />}>Load Template</RBtn>
          <ItemSep />
          <RBtn w={46} icon={<FloppyDark />}>Save</RBtn>
          <RBtn w={52} icon={<FloppySaveAs />}>Save As</RBtn>
          <RBtn w={58} icon={<FloppyTemplate />}>Save As<br />Template</RBtn>
          <ItemSep />
          <RBtn w={42} icon={<Printer />}>Quick<br />Print</RBtn>
          <RBtn w={48} icon={<Printer help />}>Print</RBtn>
          <RBtn w={49} icon={<Preview />}>Print<br />Preview</RBtn>
          <ItemSep />
          <RBtn w={44} off icon={<UndoBig />}>Undo</RBtn>
          <RBtn w={48} off icon={<UndoBig flip />}>Redo</RBtn>
        </GroupItems>
        <GroupLabel>Common</GroupLabel>
      </Group>
      <GroupSep />
      <Group>
        <GroupItems>
          <RBtn w={62} icon={<DocProps />}>Document<br />Properties</RBtn>
        </GroupItems>
        <GroupLabel>Info</GroupLabel>
      </Group>
      <GroupSep />
      <Collapse><Chevron dir="up" /></Collapse>
    </Ribbon>
    <WordBody>
      <DocPane>
        <DocMain>
          <RulerRow>
            <RulerCorner><LGlyph /></RulerCorner>
            <HorizontalRuler />
          </RulerRow>
          <DocMiddle>
            <VerticalRuler />
            <Page><Caret /></Page>
          </DocMiddle>
          <HScroll>
            <ScrollEnd><Chevron dir="left" /></ScrollEnd>
            <HThumb />
            <ScrollGap />
            <ScrollEnd><Chevron dir="right" /></ScrollEnd>
          </HScroll>
        </DocMain>
        <VScroll $h={278}>
          <VEnd><Chevron dir="up" /></VEnd>
          <VThumb $top={0} $h={57} />
          <ScrollGap />
          <VEnd><Chevron /></VEnd>
        </VScroll>
      </DocPane>
      <Splitter />
      <Panel>
        <PanelHead>
          <PanelTitle>Email</PanelTitle>
          <Pin />
          <CloseGlyph color="#777" />
        </PanelHead>
        <PanelBody>
          <Tree>
            {treeItems.map(([t, a]) => (
              <TreeRow key={t}>
                <TreeArrow $show={a} />
                {t}
              </TreeRow>
            ))}
          </Tree>
          <VScroll>
            <VEnd><Chevron dir="up" /></VEnd>
            <VThumb $top={54} $h={48} />
            <ScrollGap />
            <VEnd><Chevron /></VEnd>
          </VScroll>
        </PanelBody>
      </Panel>
    </WordBody>
    <StatusBar $h={24}>
      <Grip />
    </StatusBar>
  </Window>
);

const App: React.FC = () => (
  <Desktop>
    <GlobalStyle />
    <Defs />
    <MainWindow />
    <LetterWindow />
    <WordWindow />
  </Desktop>
);

export default App;
